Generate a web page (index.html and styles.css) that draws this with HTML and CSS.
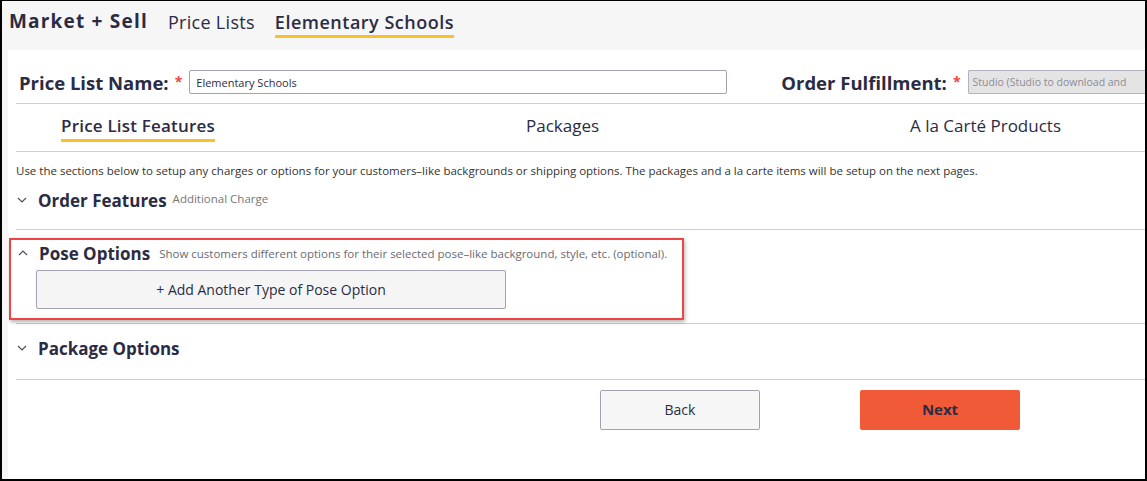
FILE: index.html
```html
<!DOCTYPE html>
<html lang="en">
<head>
    <meta charset="UTF-8">
    <meta name="viewport" content="width=device-width, initial-scale=1.0">
    <title>Market + Sell - Elementary Schools</title>
    <link rel="stylesheet" href="styles.css">
</head>
<body>

    <div class="frame">
        <div class="topbar">
            <span class="brand">Market + Sell</span>
            <a href="#" class="crumb">Price Lists</a>
            <a href="#" class="crumb current">Elementary Schools</a>
        </div>

        <div class="panel">
            <div class="name-row">
                <label for="listName" class="field-label">Price List Name:<span class="req">*</span></label>
                <input type="text" id="listName" class="name-input" value="Elementary Schools">
                <label for="fulfillment" class="field-label fulfill-label">Order Fulfillment:<span class="req">*</span></label>
                <div class="fulfill-select" id="fulfillment">Studio (Studio to download and</div>
            </div>

            <div class="tabs">
                <a href="#" class="tab active">Price List Features</a>
                <a href="#" class="tab">Packages</a>
                <a href="#" class="tab">A la Carté Products</a>
            </div>

            <p class="intro">Use the sections below to setup any charges or options for your customers–like backgrounds or shipping options. The packages and a la carte items will be setup on the next pages.</p>

            <div class="section first">
                <div class="section-head">
                    <svg class="chev" width="10" height="6" viewBox="0 0 10 6"><polyline points="1,1 5,5 9,1" fill="none" stroke="#4a4a5a" stroke-width="1.1"/></svg>
                    <span class="section-title">Order Features</span>
                    <span class="section-note">Additional Charge</span>
                </div>
            </div>

            <div class="section pose">
                <div class="highlight">
                    <div class="section-head">
                        <svg class="chev" width="10" height="6" viewBox="0 0 10 6"><polyline points="1,5 5,1 9,5" fill="none" stroke="#4a4a5a" stroke-width="1.1"/></svg>
                        <span class="section-title">Pose Options</span>
                        <span class="section-note small">Show customers different options for their selected pose–like background, style, etc. (optional).</span>
                    </div>
                    <button class="add-option">+ Add Another Type of Pose Option</button>
                </div>
            </div>

            <div class="section last">
                <div class="section-head">
                    <svg class="chev" width="10" height="6" viewBox="0 0 10 6"><polyline points="1,1 5,5 9,1" fill="none" stroke="#4a4a5a" stroke-width="1.1"/></svg>
                    <span class="section-title">Package Options</span>
                </div>
            </div>

            <div class="actions">
                <button class="btn back">Back</button>
                <button class="btn next">Next</button>
            </div>
        </div>
    </div>

</body>
</html>
```

FILE: styles.css
```css
body {
    margin: 0;
    padding: 0;
    font-family: "Open Sans", Lato, Arial, sans-serif;
    color: #2b2c44;
}

.frame {
    box-sizing: border-box;
    height: 100vh;
    background: #f6f6f6;
    border-top: 1px solid #000;
    border-left: 2px solid #000;
    border-right: 2px solid #000;
    border-bottom: 2px solid #000;
    display: flex;
    flex-direction: column;
    overflow: hidden;
}

.topbar {
    height: 49px;
    display: flex;
    align-items: flex-start;
    padding-left: 7px;
    box-sizing: border-box;
    padding-top: 8px;
}

.brand {
    font-size: 19px;
    font-weight: 700;
    letter-spacing: 1.2px;
    margin-right: 20px;
    line-height: 24px;
}

.crumb {
    color: #2b2c44;
    text-decoration: none;
    font-size: 18px;
    letter-spacing: 0.3px;
    line-height: 24px;
    margin-right: 20px;
    padding-top: 1px;
}

.crumb.current {
    font-weight: 600;
    letter-spacing: 0.5px;
    border-bottom: 3px solid #fbbf2a;
    padding-bottom: 1px;
}

.panel {
    flex: 1;
    margin-left: 6px;
    background: white;
    padding-left: 8px;
    overflow: hidden;
}

.name-row {
    height: 42px;
    padding-top: 11px;
    display: flex;
    align-items: center;
    border-bottom: 1px solid #cfcfcf;
}

.field-label {
    font-size: 18.5px;
    font-weight: 700;
    margin-left: 3px;
    white-space: nowrap;
    flex-shrink: 0;
}

.req {
    color: #f0453f;
    font-size: 14px;
    margin-left: 6px;
    vertical-align: 3px;
}

.name-input {
    width: 538px;
    flex-shrink: 0;
    height: 24px;
    box-sizing: border-box;
    margin-left: 7px;
    border: 1px solid #a3a1b3;
    border-radius: 2px;
    padding: 0 6px;
    font-family: "Open Sans", Arial, sans-serif;
    font-size: 11px;
    color: #2b2c44;
}

.fulfill-label {
    margin-left: 54px;
}

.fulfill-select {
    margin-left: 7px;
    flex: 1;
    height: 24px;
    box-sizing: border-box;
    background: #e4e4e4;
    border: 1px solid #b3b1c3;
    border-right: none;
    border-radius: 2px 0 0 2px;
    padding: 0 4px;
    font-size: 10.5px;
    line-height: 22px;
    color: #8c8c96;
    white-space: nowrap;
}

.tabs {
    height: 47px;
    display: flex;
    justify-content: space-between;
    width: 1000px;
    margin-left: 45px;
    align-items: flex-start;
}

.tab {
    color: #2b2c44;
    text-decoration: none;
    font-size: 17px;
    line-height: 20px;
    padding-top: 12px;
    padding-bottom: 3px;
}

.tab.active {
    font-weight: 600;
    letter-spacing: 0.2px;
    border-bottom: 3px solid #fbbf2a;
}

.intro {
    margin: 0;
    border-top: 1px solid #cfcfcf;
    padding-top: 12px;
    font-size: 11.5px;
    line-height: 14px;
    color: #333;
}

.section {
    border-bottom: 1px solid #cfcfcf;
}

.section.first {
    padding: 11px 0 18px;
}

.section.pose {
    padding: 8px 0 3px;
}

.section.last {
    padding: 13px 0 20px;
}

.section-head {
    display: flex;
    align-items: center;
    height: 22px;
}

.chev {
    margin-left: 1px;
    margin-right: 11px;
}

.section-title {
    font-size: 17px;
    font-weight: 700;
    margin-right: 6px;
}

.section-note {
    font-size: 11.5px;
    color: #777;
    margin-top: -4px;
}

.section-note.small {
    margin-top: 0;
    margin-left: 3px;
    color: #6a6a72;
}

.highlight {
    margin-left: -7px;
    width: 675px;
    box-sizing: border-box;
    border: 2px solid #ef4444;
    padding: 2px 0 9px 6px;
    box-shadow: 1px 2px 4px rgba(0, 0, 0, 0.3);
}

.add-option {
    display: block;
    margin: 6px 0 0 19px;
    width: 470px;
    height: 39px;
    background: #f5f5f5;
    border: 1px solid #a3a1b3;
    border-radius: 2px;
    font-family: "Open Sans", Arial, sans-serif;
    font-size: 14px;
    color: #2b2c44;
    cursor: pointer;
}

.actions {
    display: flex;
    gap: 100px;
    padding-left: 584px;
    margin-top: 10px;
}

.btn {
    width: 160px;
    height: 40px;
    border-radius: 2px;
    font-family: "Open Sans", Arial, sans-serif;
    font-size: 14px;
    color: #2b2c44;
    cursor: pointer;
    padding-bottom: 3px;
}

.back {
    background: #f6f6f6;
    border: 1px solid #a3a1b3;
}

.next {
    background: #f15a37;
    border: none;
    font-weight: 700;
    font-size: 15px;
}
```
